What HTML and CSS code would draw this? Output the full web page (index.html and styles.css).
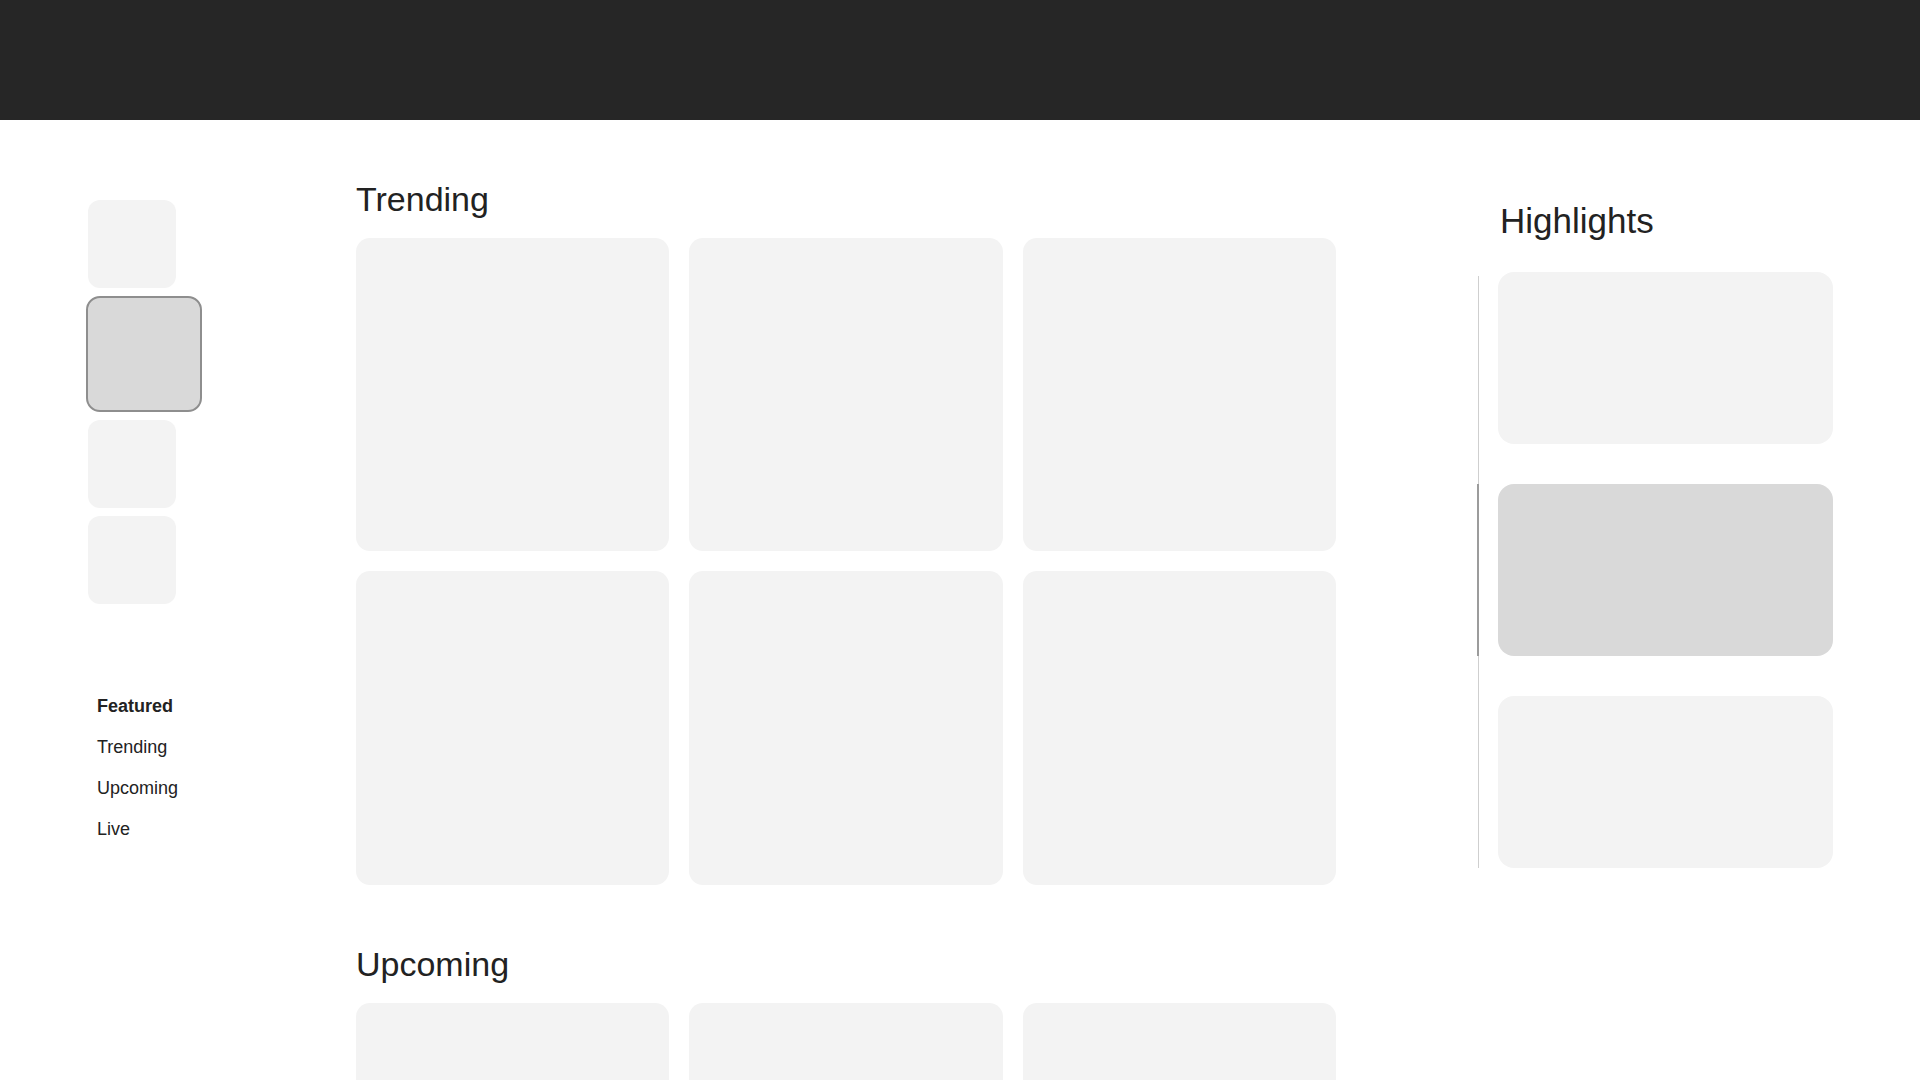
FILE: index.html
```html
<!DOCTYPE html>
<html lang="en">
<head>
<meta charset="utf-8">
<title>Browse</title>
<link rel="stylesheet" href="styles.css">
</head>
<body>
<header class="topbar"></header>
<div class="layout">
  <aside class="sidebar">
    <div class="thumbs">
      <div class="thumb"></div>
      <div class="thumb thumb-active"></div>
      <div class="thumb"></div>
      <div class="thumb"></div>
    </div>
    <nav class="nav">
      <a class="nav-item nav-item-active">Featured</a>
      <a class="nav-item">Trending</a>
      <a class="nav-item">Upcoming</a>
      <a class="nav-item">Live</a>
    </nav>
  </aside>
  <main class="content">
    <section class="section">
      <h2 class="section-title">Trending</h2>
      <div class="card-grid">
        <div class="card"></div>
        <div class="card"></div>
        <div class="card"></div>
        <div class="card"></div>
        <div class="card"></div>
        <div class="card"></div>
      </div>
    </section>
    <section class="section section-next">
      <h2 class="section-title">Upcoming</h2>
      <div class="card-grid">
        <div class="card"></div>
        <div class="card"></div>
        <div class="card"></div>
      </div>
    </section>
  </main>
  <aside class="highlights">
    <h2 class="highlights-title">Highlights</h2>
    <div class="highlight-list">
      <div class="highlight"></div>
      <div class="highlight highlight-active"></div>
      <div class="highlight"></div>
    </div>
  </aside>
</div>
</body>
</html>
```
FILE: styles.css
```css
html, body {
  margin: 0;
  padding: 0;
  background: #ffffff;
}
html {
  overflow: hidden;
}
body {
  font-family: "Liberation Sans", Arial, Helvetica, sans-serif;
  color: #222222;
}
.topbar {
  height: 120px;
  background: #262626;
}
.layout {
  display: flex;
  align-items: flex-start;
}
.sidebar {
  width: 268px;
  padding: 80px 0 0 88px;
  box-sizing: content-box;
  flex: none;
}
.thumbs {
  display: flex;
  flex-direction: column;
  align-items: flex-start;
  gap: 8px;
}
.thumb {
  width: 88px;
  height: 88px;
  border-radius: 12px;
  background: #f3f3f3;
}
.thumb-active {
  width: 112px;
  height: 112px;
  margin-left: -2px;
  border: 2px solid #8e8e8e;
  border-radius: 14px;
  background: #d9d9d9;
}
.nav {
  display: flex;
  flex-direction: column;
  margin-top: 82px;
  padding-left: 9px;
}
.nav-item {
  font-size: 18px;
  line-height: 41px;
  color: #222222;
  text-decoration: none;
}
.nav-item-active {
  font-weight: 700;
}
.content {
  width: 980px;
  flex: none;
  padding-top: 59px;
}
.section-title {
  margin: 0 0 19px 0;
  font-size: 34px;
  line-height: 40px;
  font-weight: 400;
  color: #222222;
}
.section-next {
  margin-top: 59px;
}
.card-grid {
  display: grid;
  grid-template-columns: repeat(3, 1fr);
  gap: 20px;
}
.card {
  aspect-ratio: 1 / 1;
  border-radius: 14px;
  background: #f3f3f3;
}
.highlights {
  width: 355px;
  flex: none;
  margin-left: 142px;
  padding-top: 81px;
}
.highlights-title {
  margin: 0 0 31px 0;
  padding-left: 22px;
  font-size: 35px;
  line-height: 40px;
  font-weight: 400;
  color: #222222;
}
.highlight-list {
  position: relative;
  display: flex;
  flex-direction: column;
  gap: 40px;
  padding-left: 20px;
}
.highlight-list::before {
  content: "";
  position: absolute;
  left: 0;
  top: 4px;
  bottom: 0;
  width: 1px;
  background: #cfcfcf;
}
.highlight {
  position: relative;
  height: 172px;
  border-radius: 16px;
  background: #f3f3f3;
}
.highlight-active {
  background: #d9d9d9;
}
.highlight-active::before {
  content: "";
  position: absolute;
  left: -21px;
  top: 0;
  bottom: 0;
  width: 2px;
  background: #9c9c9c;
}
```
